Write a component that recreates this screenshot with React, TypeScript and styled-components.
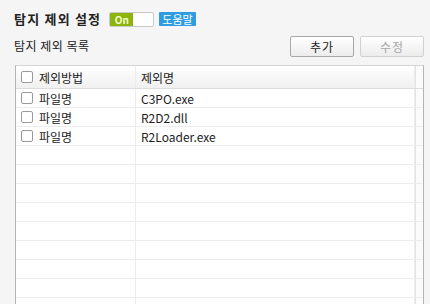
import React from 'react';
import styled, { createGlobalStyle } from 'styled-components';

const GlobalStyle = createGlobalStyle`
  html, body {
    margin: 0;
    padding: 0;
    background: #f5f5f5;
    font-family: "Noto Sans CJK KR", "Noto Sans", sans-serif;
    color: #222;
  }
`;

const Page = styled.div`
  width: 430px;
  height: 304px;
  overflow: hidden;
  box-sizing: border-box;
  padding: 11px 6px 0 14px;
`;

const TitleRow = styled.div`
  display: flex;
  align-items: center;
  height: 16px;
`;

const Title = styled.h1`
  margin: 0 8px 0 0;
  font-size: 13px;
  font-weight: 700;
  letter-spacing: 1.2px;
  line-height: 16px;
`;

const Toggle = styled.div`
  display: flex;
  width: 45px;
  height: 15px;
  box-sizing: border-box;
  border: 1px solid #c8c8c8;
  border-radius: 2px;
  background: #fff;
  overflow: hidden;
`;

const ToggleOn = styled.span`
  width: 23px;
  background: #8cb40a;
  color: #f4ffd0;
  font-size: 10px;
  font-weight: 700;
  line-height: 13px;
  text-align: center;
`;

const HelpBadge = styled.span`
  margin-left: 5px;
  padding: 0 3px;
  height: 14px;
  background: #2f9be0;
  color: #fff;
  font-size: 11px;
  line-height: 14px;
  border-radius: 1px;
`;

const SubRow = styled.div`
  display: flex;
  justify-content: space-between;
  align-items: flex-end;
  margin-top: 9px;
`;

const SubTitle = styled.div`
  font-size: 12px;
  letter-spacing: 0.5px;
  line-height: 16px;
  margin-bottom: 3px;
`;

const Buttons = styled.div`
  display: flex;
  gap: 6px;
`;

const Button = styled.button<{ disabled?: boolean }>`
  width: 64px;
  height: 21px;
  padding: 0;
  box-sizing: border-box;
  border: 1px solid ${p => (p.disabled ? '#d0d0d0' : '#a8a8a8')};
  border-radius: 2px;
  background: linear-gradient(#ffffff, #ececec);
  font-family: inherit;
  font-size: 12px;
  color: ${p => (p.disabled ? '#a8a8a8' : '#222')};
  letter-spacing: 1px;
`;

const Table = styled.div`
  margin: 8px 0 0 1px;
  border: 1px solid #b4b4b4;
  border-top-color: #d4d4d4;
  background: #fff;
`;

const Row = styled.div<{ header?: boolean }>`
  display: grid;
  grid-template-columns: 120px 1fr 8px;
  box-sizing: border-box;
  height: ${p => (p.header ? '23px' : '19px')};
  border-bottom: 1px solid ${p => (p.header ? '#dcdcdc' : '#ececec')};
  background: ${p => (p.header ? 'linear-gradient(#ffffff, #f0f0f0)' : '#fff')};
  font-size: 12px;
`;

const Cell = styled.div`
  display: flex;
  align-items: center;
  padding-left: 5px;
  border-right: 1px solid #ececec;
  white-space: nowrap;
  overflow: hidden;
`;

const NameCell = styled(Cell)`
  padding-left: 5px;
`;

const Scroll = styled.div`
  border-left: 1px solid #e4e4e4;
  background: #fbfbfb;
`;

const Check = styled.span`
  width: 10px;
  height: 10px;
  border: 1px solid #9a9a9a;
  border-radius: 2px;
  background: #fff;
  margin-right: 6px;
  flex: none;
`;

const rows = [
  { method: '파일명', name: 'C3PO.exe' },
  { method: '파일명', name: 'R2D2.dll' },
  { method: '파일명', name: 'R2Loader.exe' },
];

export default function App() {
  const empty = Array.from({ length: 10 });
  return (
    <>
      <GlobalStyle />
      <Page>
        <TitleRow>
          <Title>탐지 제외 설정</Title>
          <Toggle>
            <ToggleOn>On</ToggleOn>
          </Toggle>
          <HelpBadge>도움말</HelpBadge>
        </TitleRow>
        <SubRow>
          <SubTitle>탐지 제외 목록</SubTitle>
          <Buttons>
            <Button>추가</Button>
            <Button disabled>수정</Button>
          </Buttons>
        </SubRow>
        <Table>
          <Row header>
            <Cell>
              <Check />
              제외방법
            </Cell>
            <NameCell>제외명</NameCell>
            <Scroll />
          </Row>
          {rows.map((r, i) => (
            <Row key={i}>
              <Cell>
                <Check />
                {r.method}
              </Cell>
              <NameCell>{r.name}</NameCell>
              <Scroll />
            </Row>
          ))}
          {empty.map((_, i) => (
            <Row key={'e' + i}>
              <Cell />
              <NameCell />
              <Scroll />
            </Row>
          ))}
        </Table>
      </Page>
    </>
  );
}
